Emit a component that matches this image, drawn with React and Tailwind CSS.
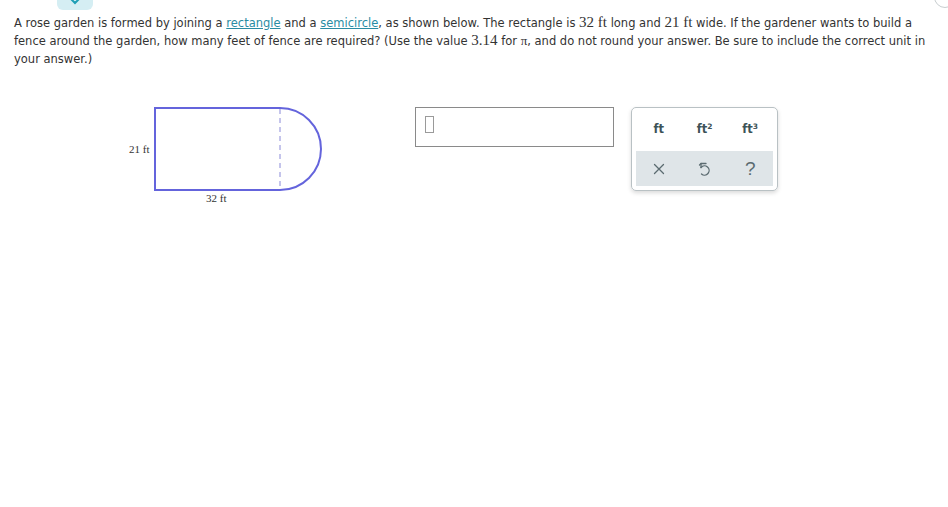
import React from 'react';

const M = ({ children }) => (
    <span className="font-['Liberation_Serif','DejaVu_Serif',serif] text-[15px] leading-none">{children}</span>
);

const UndoIcon = () => (
    <svg width="14" height="16" viewBox="0 0 14 16" fill="none" stroke="#5b6b70" strokeWidth="1.3" strokeLinecap="round" strokeLinejoin="round">
        <path d="M4 6.5 A4.6 4.6 0 1 1 4.5 13" />
        <path d="M4 2.5 V6.5 M4 2.5 H9" />
        <path d="M2.5 4 L4 2.5" />
    </svg>
);

const App = () => {
    return (
        <div className="relative w-[948px] h-[507px] bg-white overflow-hidden font-['DejaVu_Sans','Verdana',sans-serif] text-[#333]">
            {/* top tab */}
            <div className="ml-[57px] w-[36px] h-[10px] bg-[#d5eef3] rounded-b-[6px] flex justify-center">
                <svg width="12" height="6" viewBox="0 0 12 6" className="-mt-[1px]">
                    <path d="M2 0 L6 4 L10 0" fill="none" stroke="#1f9fb5" strokeWidth="2" strokeLinecap="round" />
                </svg>
            </div>
            <div className="absolute -top-[14px] -right-[8px] w-[22px] h-[22px] rounded-full border border-[#c8ced0] bg-white" />

            {/* question */}
            <p className="pl-[14px] pr-[12px] pt-[4px] text-[11.5px] leading-[18px]">
                A rose garden is formed by joining a{' '}
                <span className="text-[#2a8ca3] underline">rectangle</span> and a{' '}
                <span className="text-[#2a8ca3] underline">semicircle</span>, as shown below. The rectangle is <M>32 ft</M> long and <M>21 ft</M> wide. If the gardener wants to build a fence around the garden, how many feet of fence are required? (Use the value <M>3.14</M> for <span className="font-['Liberation_Serif',serif] text-[13px] leading-none">π</span>, and do not round your answer. Be sure to include the correct unit in your answer.)
            </p>

            {/* work area */}
            <div className="flex items-start mt-[39px]">
                <svg width="220" height="110" viewBox="0 0 220 110" className="ml-[120px] -mt-[6px] shrink-0">
                    <path d="M35 7 H160 A41 41 0 0 1 160 89 H35 Z" fill="none" stroke="#6464dc" strokeWidth="2" />
                    <line x1="160" y1="8" x2="160" y2="88" stroke="#8a8ad8" strokeWidth="1" strokeDasharray="5 4" />
                    <text x="9" y="52" fontFamily="Liberation Serif, serif" fontSize="11" fill="#333">21 ft</text>
                    <text x="86" y="101" fontFamily="Liberation Serif, serif" fontSize="11" fill="#333">32 ft</text>
                </svg>

                <div className="ml-[75px] w-[199px] h-[40px] border border-[#8a8a8a] shrink-0 pt-[8px] pl-[9px]">
                    <div className="w-[9px] h-[17px] border border-[#9a9a9a]" />
                </div>

                <div className="ml-[17px] w-[147px] h-[84px] border border-[#b9c1c4] rounded-[5px] shadow-[0_2px_4px_rgba(0,0,0,0.15)] px-[4px] pb-[4px] flex flex-col shrink-0">
                    <div className="grid grid-cols-3 h-[43px] items-center text-center text-[11.5px] font-bold text-[#3d5358]">
                        <span>ft</span>
                        <span>ft<sup className="text-[7.5px]">2</sup></span>
                        <span>ft<sup className="text-[7.5px]">3</sup></span>
                    </div>
                    <div className="grid grid-cols-3 flex-1 items-center justify-items-center bg-[#dfe5e8] text-[#5b6b70]">
                        <svg width="12" height="12" viewBox="0 0 12 12" stroke="#5b6b70" strokeWidth="1.3" strokeLinecap="round">
                            <path d="M1.5 1.5 L10.5 10.5 M10.5 1.5 L1.5 10.5" />
                        </svg>
                        <UndoIcon />
                        <span className="text-[19px] leading-none font-['Liberation_Sans',sans-serif] text-[#5b6b70]">?</span>
                    </div>
                </div>
            </div>
        </div>
    );
};

export default App;
